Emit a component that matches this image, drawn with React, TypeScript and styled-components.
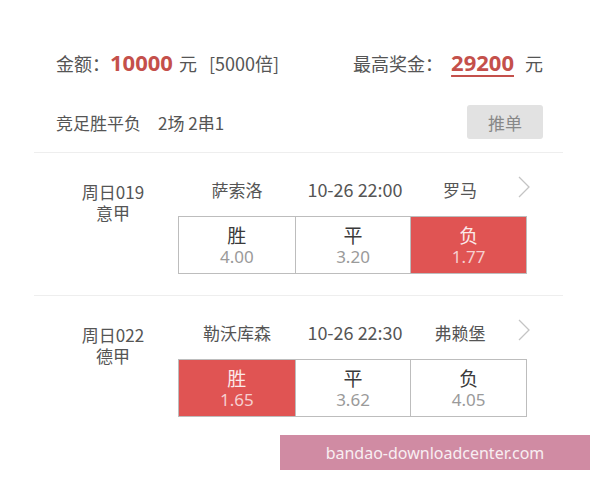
import React, { FC } from "react";
import styled, { createGlobalStyle } from "styled-components";

const GlobalStyle = createGlobalStyle`
  html, body {
    margin: 0;
    padding: 0;
    background: #fff;
  }
  body {
    font-family: "Noto Sans CJK SC", "Noto Sans", sans-serif;
    color: #555;
  }
`;

const Page = styled.div`
  width: 600px;
  height: 480px;
  position: relative;
  overflow: hidden;
  padding: 0 37px 0 34px;
  box-sizing: border-box;
`;

const Header = styled.div`
  padding: 41px 20px 13px 22px;
  border-bottom: 1px solid #eee;
`;

const Row = styled.div<{ h: number; mt?: number }>`
  display: flex;
  align-items: center;
  justify-content: space-between;
  height: ${(p) => p.h}px;
  margin-top: ${(p) => p.mt || 0}px;
`;

const Label = styled.span<{ ml?: number }>`
  font-size: 18px;
  color: #555;
  white-space: pre;
  margin-left: ${(p) => p.ml || 0}px;
`;

const Money = styled.span<{ underline?: boolean; ml?: number }>`
  font-size: 22px;
  font-weight: bold;
  color: #c4504b;
  margin-left: ${(p) => p.ml || 0}px;
  text-decoration: ${(p) => (p.underline ? "underline" : "none")};
  text-underline-offset: 4px;
  text-decoration-thickness: 2px;
  font-family: "Noto Sans", sans-serif;
`;

const Group = styled.div`
  display: flex;
  align-items: baseline;
`;

const PlayText = styled.span<{ ml?: number }>`
  font-size: 17px;
  color: #555;
  white-space: pre;
  margin-left: ${(p) => p.ml || 0}px;
`;

const PushButton = styled.button`
  width: 76px;
  height: 34px;
  border: none;
  border-radius: 3px;
  background: #e2e2e2;
  color: #888;
  font-size: 17px;
  font-family: inherit;
  padding: 0;
`;

const Match = styled.div<{ last?: boolean }>`
  display: flex;
  padding: 23px 0 21px 14px;
  border-bottom: ${(p) => (p.last ? "none" : "1px solid #eee")};
`;

const LeftCol = styled.div`
  width: 130px;
  text-align: center;
  padding-top: 5px;
  font-size: 17px;
  line-height: 21px;
  color: #555;
`;

const RightCol = styled.div`
  width: 349px;
`;

const Teams = styled.div`
  position: relative;
  display: grid;
  grid-template-columns: 118px 118px 92px;
  height: 24px;
  align-items: center;
  margin-bottom: 16px;
  font-size: 17px;
  color: #555;
  text-align: center;
  white-space: nowrap;
`;

const Time = styled.span`
  font-size: 18px;
`;

const Chevron = styled.svg`
  position: absolute;
  right: -4px;
  top: -1px;
`;

const Odds = styled.div`
  display: grid;
  grid-template-columns: repeat(3, 1fr);
  border: 1px solid #bdbdbd;
  height: 58px;
  box-sizing: border-box;
`;

const Cell = styled.div<{ active?: boolean }>`
  display: flex;
  flex-direction: column;
  align-items: center;
  justify-content: center;
  background: ${(p) => (p.active ? "#e05453" : "#fff")};
  border-left: 1px solid #bdbdbd;
  &:first-child {
    border-left: none;
  }
`;

const Result = styled.span<{ active?: boolean }>`
  font-size: 19px;
  line-height: 23px;
  color: ${(p) => (p.active ? "#fbe9e9" : "#3a3a3a")};
`;

const Rate = styled.span<{ active?: boolean }>`
  font-size: 17px;
  line-height: 21px;
  color: ${(p) => (p.active ? "#f6cfcf" : "#9a9a9a")};
  font-family: "Noto Sans", sans-serif;
`;

const Watermark = styled.div`
  position: absolute;
  left: 280px;
  top: 435px;
  width: 310px;
  height: 35px;
  background: #d08ba3;
  color: #f8eef2;
  font-size: 16px;
  font-family: "Noto Sans", sans-serif;
  display: flex;
  align-items: center;
  justify-content: center;
`;

interface MatchData {
  no: string;
  league: string;
  home: string;
  time: string;
  away: string;
  odds: string[];
  pick: number;
}

const matches: MatchData[] = [
  { no: "周日019", league: "意甲", home: "萨索洛", time: "10-26 22:00", away: "罗马", odds: ["4.00", "3.20", "1.77"], pick: 2 },
  { no: "周日022", league: "德甲", home: "勒沃库森", time: "10-26 22:30", away: "弗赖堡", odds: ["1.65", "3.62", "4.05"], pick: 0 },
];

const results = ["胜", "平", "负"];

const MatchRow: FC<{ m: MatchData; last?: boolean }> = ({ m, last }) => (
  <Match last={last}>
    <LeftCol>
      <div>{m.no}</div>
      <div>{m.league}</div>
    </LeftCol>
    <RightCol>
      <Teams>
        <span>{m.home}</span>
        <Time>{m.time}</Time>
        <span>{m.away}</span>
        <Chevron width="14" height="24" viewBox="0 0 14 24">
          <path d="M2 2 L12 12 L2 22" fill="none" stroke="#c4c4c4" strokeWidth="1.3" />
        </Chevron>
      </Teams>
      <Odds>
        {results.map((r, i) => (
          <Cell key={r} active={i === m.pick}>
            <Result active={i === m.pick}>{r}</Result>
            <Rate active={i === m.pick}>{m.odds[i]}</Rate>
          </Cell>
        ))}
      </Odds>
    </RightCol>
  </Match>
);

const App: FC = () => (
  <>
    <GlobalStyle />
    <Page>
      <Header>
        <Row h={42}>
          <Group>
            <Label>金额：</Label>
            <Money>10000</Money>
            <Label ml={6}>元</Label>
            <Label ml={12}>[5000倍]</Label>
          </Group>
          <Group>
            <Label>最高奖金：</Label>
            <Money underline ml={8}>29200</Money>
            <Label ml={11}>元</Label>
          </Group>
        </Row>
        <Row h={34} mt={22}>
          <Group>
            <PlayText>竞足胜平负</PlayText>
            <PlayText ml={17}>2场 2串1</PlayText>
          </Group>
          <PushButton>推单</PushButton>
        </Row>
      </Header>
      {matches.map((m, i) => (
        <MatchRow key={m.no} m={m} last={i === matches.length - 1} />
      ))}
      <Watermark>bandao-downloadcenter.com</Watermark>
    </Page>
  </>
);

export default App;
